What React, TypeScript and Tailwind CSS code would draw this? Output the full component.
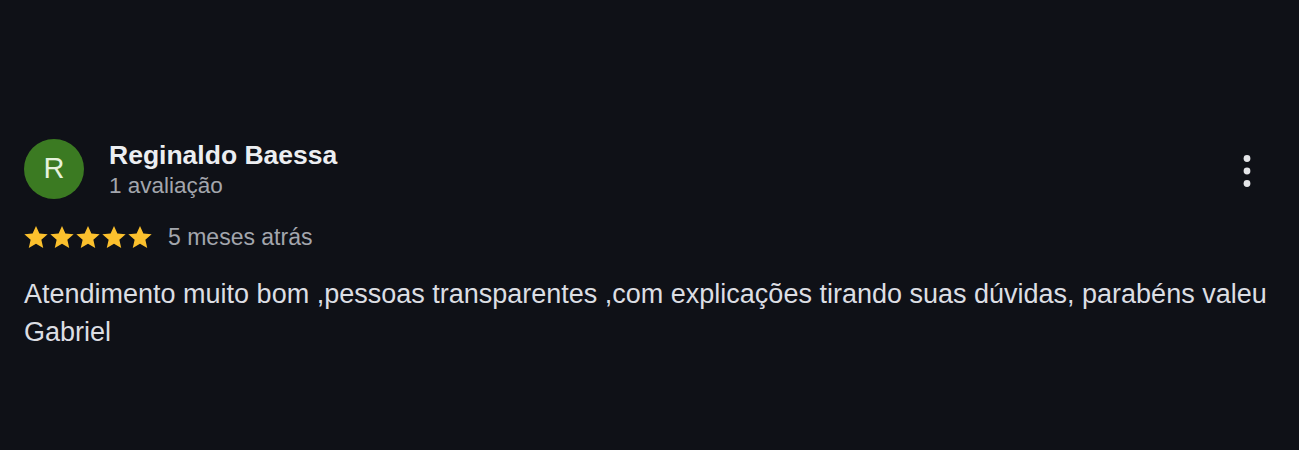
function Star() {
  return (
    <svg viewBox="0 0 24 24" className="-mx-px h-[28px] w-[28px]" fill="#fbc02d">
      <path d="M12 2.5l2.9 6.6 7.1.6-5.4 4.7 1.6 7-6.2-3.7-6.2 3.7 1.6-7L2 9.7l7.1-.6z" />
    </svg>
  );
}

function Kebab() {
  return (
    <svg viewBox="0 0 10 34" className="h-[34px] w-[10px]" fill="#e4e5e8">
      <circle cx="5" cy="4.5" r="3.4" />
      <circle cx="5" cy="17" r="3.4" />
      <circle cx="5" cy="29.5" r="3.4" />
    </svg>
  );
}

export default function App() {
  return (
    <div className="min-h-[450px] bg-[#0f1117] px-6 pt-[139px] font-['Liberation_Sans',Arial,sans-serif]">
      <div className="flex items-start">
        <div className="flex h-[60px] w-[60px] shrink-0 items-center justify-center rounded-full bg-[#3b7a22] text-[29px] text-[#e6f2dc]">
          R
        </div>
        <div className="ml-[25px] flex flex-1 flex-col pt-[1px]">
          <span className="text-[26.5px] font-bold leading-[30px] text-[#eceef1]">Reginaldo Baessa</span>
          <span className="mt-[3px] text-[22.5px] leading-[26px] text-[#a3a6ad]">1 avaliação</span>
        </div>
        <button className="mr-[23px] mt-[15px]">
          <Kebab />
        </button>
      </div>
      <div className="mt-[25px] flex h-[26px] items-center">
        <div className="-ml-[1px] flex">
          <Star />
          <Star />
          <Star />
          <Star />
          <Star />
        </div>
        <span className="ml-[15px] text-[23px] leading-[26px] text-[#a3a6ad]">5 meses atrás</span>
      </div>
      <p className="mt-[25px] text-[27px] leading-[38px] text-[#dcdee3]">
        Atendimento muito bom ,pessoas transparentes ,com explicações tirando suas dúvidas, parabéns valeu Gabriel
      </p>
    </div>
  );
}
